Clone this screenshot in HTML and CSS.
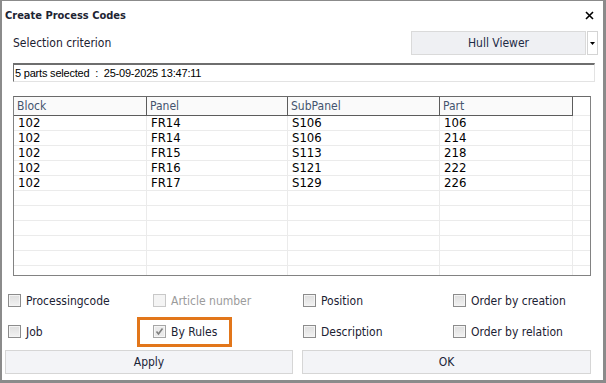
FILE: index.html
```html
<!DOCTYPE html>
<html>
<head>
<meta charset="utf-8">
<link rel="stylesheet" href="styles.css">
</head>
<body>
<div class="window">
  <header class="titlebar">
    <span class="title">Create Process Codes</span>
    <svg class="close" width="9" height="9" viewBox="0 0 9 9"><path d="M1 1L8 8M8 1L1 8" stroke="#000" stroke-width="1.6" fill="none"/></svg>
  </header>
  <div class="criteria">
    <span class="label">Selection criterion</span>
    <div class="combo">
      <div class="combo-value">Hull Viewer</div>
      <div class="combo-arrow"><svg width="5" height="3" viewBox="0 0 5 3"><path d="M0 0H5L2.5 3Z" fill="#000"/></svg></div>
    </div>
  </div>
  <div class="status">5 parts selected  :  25-09-2025 13:47:11</div>
  <div class="grid">
    <div class="grid-head">
      <div class="hcell">Block</div>
      <div class="hcell">Panel</div>
      <div class="hcell">SubPanel</div>
      <div class="hcell">Part</div>
      <div class="hcell hcell-empty"></div>
    </div>
    <div class="grid-body">
      <div class="row"><div class="cell">102</div><div class="cell">FR14</div><div class="cell">S106</div><div class="cell">106</div><div class="cell"></div></div>
      <div class="row"><div class="cell">102</div><div class="cell">FR14</div><div class="cell">S106</div><div class="cell">214</div><div class="cell"></div></div>
      <div class="row"><div class="cell">102</div><div class="cell">FR15</div><div class="cell">S113</div><div class="cell">218</div><div class="cell"></div></div>
      <div class="row"><div class="cell">102</div><div class="cell">FR16</div><div class="cell">S121</div><div class="cell">222</div><div class="cell"></div></div>
      <div class="row"><div class="cell">102</div><div class="cell">FR17</div><div class="cell">S129</div><div class="cell">226</div><div class="cell"></div></div>
      <div class="row"><div class="cell"></div><div class="cell"></div><div class="cell"></div><div class="cell"></div><div class="cell"></div></div>
      <div class="row"><div class="cell"></div><div class="cell"></div><div class="cell"></div><div class="cell"></div><div class="cell"></div></div>
      <div class="row"><div class="cell"></div><div class="cell"></div><div class="cell"></div><div class="cell"></div><div class="cell"></div></div>
      <div class="row"><div class="cell"></div><div class="cell"></div><div class="cell"></div><div class="cell"></div><div class="cell"></div></div>
      <div class="row"><div class="cell"></div><div class="cell"></div><div class="cell"></div><div class="cell"></div><div class="cell"></div></div>
      <div class="row"><div class="cell"></div><div class="cell"></div><div class="cell"></div><div class="cell"></div><div class="cell"></div></div>
    </div>
  </div>
  <div class="options">
    <label class="check"><span class="box"></span><span>Processingcode</span></label>
    <label class="check disabled"><span class="box"></span><span>Article number</span></label>
    <label class="check"><span class="box"></span><span>Position</span></label>
    <label class="check"><span class="box"></span><span>Order by creation</span></label>
    <label class="check"><span class="box"></span><span>Job</span></label>
    <label class="check highlight"><span class="box checked"><svg width="11" height="11" viewBox="0 0 11 11"><path d="M2.5 5.5L4.5 8L8.5 2.5" stroke="#7f7f7f" stroke-width="1.6" fill="none"/></svg></span><span>By Rules</span></label>
    <label class="check"><span class="box"></span><span>Description</span></label>
    <label class="check"><span class="box"></span><span>Order by relation</span></label>
  </div>
  <div class="actions">
    <button class="btn">Apply</button>
    <button class="btn">OK</button>
  </div>
</div>
</body>
</html>
```
FILE: styles.css
```css
html, body {
  margin: 0;
  padding: 0;
  background: #fff;
}

.window {
  width: 606px;
  height: 383px;
  box-sizing: border-box;
  border-style: solid;
  border-color: #8b8b8b;
  border-width: 1px 3px 3px 2px;
  background: #fff;
  display: flex;
  flex-direction: column;
  font-family: "DejaVu Sans Condensed", "DejaVu Sans", sans-serif;
  font-stretch: condensed;
  font-size: 12px;
  color: #1b2130;
}

.titlebar {
  height: 28px;
  display: flex;
  align-items: center;
  justify-content: space-between;
  padding: 0 9px 0 3px;
}

.title {
  font-weight: bold;
  font-size: 11px;
  color: #1d2433;
}

.criteria {
  margin-top: 2px;
  height: 24px;
  display: flex;
  align-items: center;
  justify-content: space-between;
  padding: 0 5px 0 11px;
}

.combo {
  display: flex;
  gap: 1px;
  height: 24px;
}

.combo-value {
  width: 175px;
  box-sizing: border-box;
  border: 1px solid #dadada;
  background: #eff0f3;
  display: flex;
  align-items: center;
  justify-content: center;
  color: #1e2b45;
}

.combo-arrow {
  width: 11px;
  box-sizing: border-box;
  border: 1px solid #d4d4d4;
  background: #fff;
  display: flex;
  align-items: center;
  justify-content: center;
}

.status {
  margin: 8px 8px 0 11px;
  height: 19px;
  box-sizing: border-box;
  border-style: solid;
  border-width: 2px 1px 1px 1px;
  border-color: #6e6e6e #e3e3e3 #e3e3e3 #6e6e6e;
  font-family: "Liberation Sans", Arial, sans-serif;
  font-stretch: normal;
  font-size: 11px;
  letter-spacing: -0.2px;
  color: #000;
  padding-left: 1px;
  display: flex;
  align-items: center;
  white-space: pre;
}

.grid {
  margin: 14px 12px 0 11px;
  height: 180px;
  box-sizing: border-box;
  border: 1px solid #828282;
  border-top-color: #6a6a6a;
  overflow: hidden;
}

.grid-head,
.row {
  display: grid;
  grid-template-columns: 133px 141px 152px 133px 1fr;
}

.grid-head {
  height: 19px;
}

.hcell {
  box-sizing: border-box;
  border-right: 1px solid #5c5c5c;
  border-bottom: 1px solid #5c5c5c;
  background: #fafafa;
  color: #44546e;
  padding-left: 3px;
  line-height: 18px;
  font-size: 12px;
}

.hcell-empty {
  border-right: none;
  border-bottom: 1px solid #ebebeb;
  background: #fff;
}

.grid-body {
  height: 159px;
  overflow: hidden;
}

.row {
  height: 15px;
}

.cell {
  box-sizing: border-box;
  border-right: 1px solid #ebebeb;
  border-bottom: 1px solid #ebebeb;
  padding-left: 4px;
  font-size: 13px;
  line-height: 14px;
  color: #000;
}

.cell:last-child {
  border-right: none;
}

.options {
  display: grid;
  grid-template-columns: 145px 150px 150px 1fr;
  grid-auto-rows: 31px;
  margin-top: 9px;
  padding-left: 6px;
}

.check {
  display: flex;
  align-items: center;
  gap: 5px;
  color: #1b2233;
  white-space: nowrap;
}

.box {
  width: 13px;
  height: 13px;
  box-sizing: border-box;
  border: 1px solid #8c8c8c;
  background: linear-gradient(#dedede, #f2f2f2);
  box-shadow: inset 0 0 0 1px #f4f4f4;
  display: flex;
  align-items: center;
  justify-content: center;
  flex: none;
}

.disabled {
  color: #9b9b9b;
}

.disabled .box {
  border-color: #c8c8c8;
  background: #f4f4f4;
  box-shadow: none;
}

.box.checked {
  border-color: #a6a6a6;
  background: #eaeaea;
  box-shadow: inset 0 0 0 1px #f6f6f6;
}

.highlight {
  position: relative;
}

.highlight::after {
  content: "";
  position: absolute;
  left: -16px;
  top: 1px;
  width: 95px;
  height: 30px;
  box-sizing: border-box;
  border: 3px solid #e2761a;
}

.actions {
  display: grid;
  grid-template-columns: 288px 289px;
  gap: 9px;
  margin-top: 3px;
  padding-left: 3px;
  height: 24px;
}

.btn {
  font: inherit;
  font-stretch: condensed;
  font-size: 12px;
  color: #1a2438;
  background: #f3f4f7;
  border: 1px solid #d6d6d6;
  margin: 0;
  padding: 0;
}
```
